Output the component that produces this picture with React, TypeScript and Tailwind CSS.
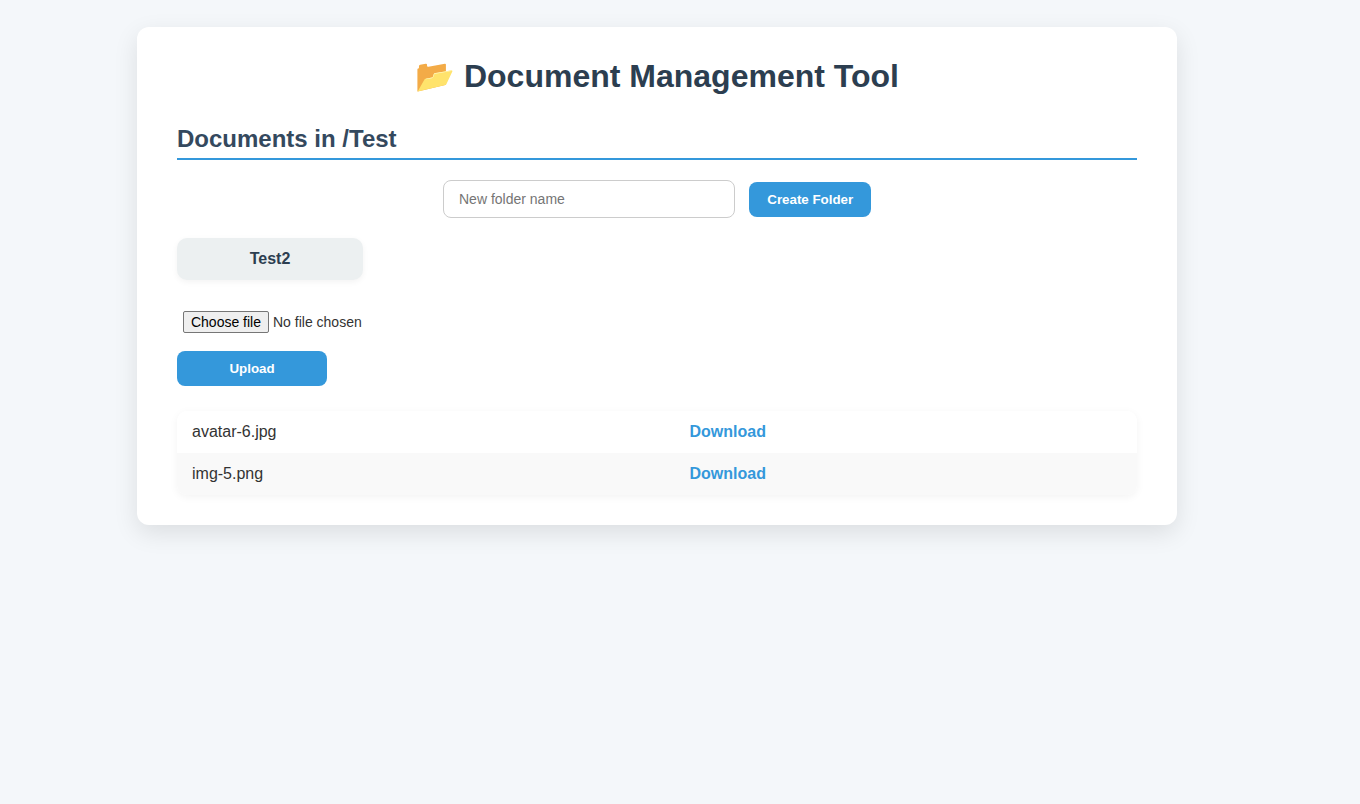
const files = ['avatar-6.jpg', 'img-5.png'];

export default function App() {
  return (
    <div className="min-h-screen bg-[#f4f7fa] pt-[27px] pl-[137px] font-['Liberation_Sans',Arial,sans-serif] text-[#333]">
      <main className="h-[498px] w-[1040px] rounded-xl bg-white px-10 pt-[31px] shadow-[0_8px_24px_rgba(0,0,0,0.1)]">
        <h1 className="text-center text-[32px] leading-[37px] font-bold text-[#2c3e50]">📂 Document Management Tool</h1>
        <h2 className="mt-[30px] h-[35px] border-b-2 border-[#3498db] text-2xl leading-[27px] font-bold text-[#34495e]">
          Documents in /Test
        </h2>
        <form className="mt-5 flex items-center justify-center gap-3.5" onSubmit={(e) => e.preventDefault()}>
          <input
            type="text"
            placeholder="New folder name"
            className="h-[38px] w-[292px] rounded-lg border border-[#ccc] px-[15px] text-sm placeholder:text-[#757575]"
          />
          <button className="h-[35px] w-[122px] rounded-lg bg-[#3498db] pt-px pl-[0.5px] text-[13.333px] leading-[15px] font-bold text-white">
            Create Folder
          </button>
        </form>
        <div className="mt-5 h-[42px] w-[186px] rounded-[10px] bg-[#ecf0f1] pt-3 text-center leading-[18px] font-bold text-[#2c3e50] shadow-[0_2px_6px_rgba(0,0,0,0.05)]">
          Test2
        </div>
        <div className="mt-[31px] ml-1.5 flex h-[22px] items-center gap-1 text-sm">
          <button className="h-[22px] w-[86px] rounded-[2px] border border-[#767676] bg-[#efefef] leading-[20px] text-black">
            Choose file
          </button>
          <span>No file chosen</span>
        </div>
        <button className="mt-[18px] block h-[35px] w-[150px] rounded-lg bg-[#3498db] text-[13.333px] font-bold text-white">
          Upload
        </button>
        <ul className="mt-[25px] overflow-hidden rounded-[10px] shadow-[0_2px_8px_rgba(0,0,0,0.05)]">
          {files.map((name) => (
            <li key={name} className="flex h-[42px] items-center bg-white px-[15px] even:bg-[#f9f9f9]">
              <span className="w-[497.5px]">{name}</span>
              <a href="#" className="font-bold text-[#3498db]">Download</a>
            </li>
          ))}
        </ul>
      </main>
    </div>
  );
}
